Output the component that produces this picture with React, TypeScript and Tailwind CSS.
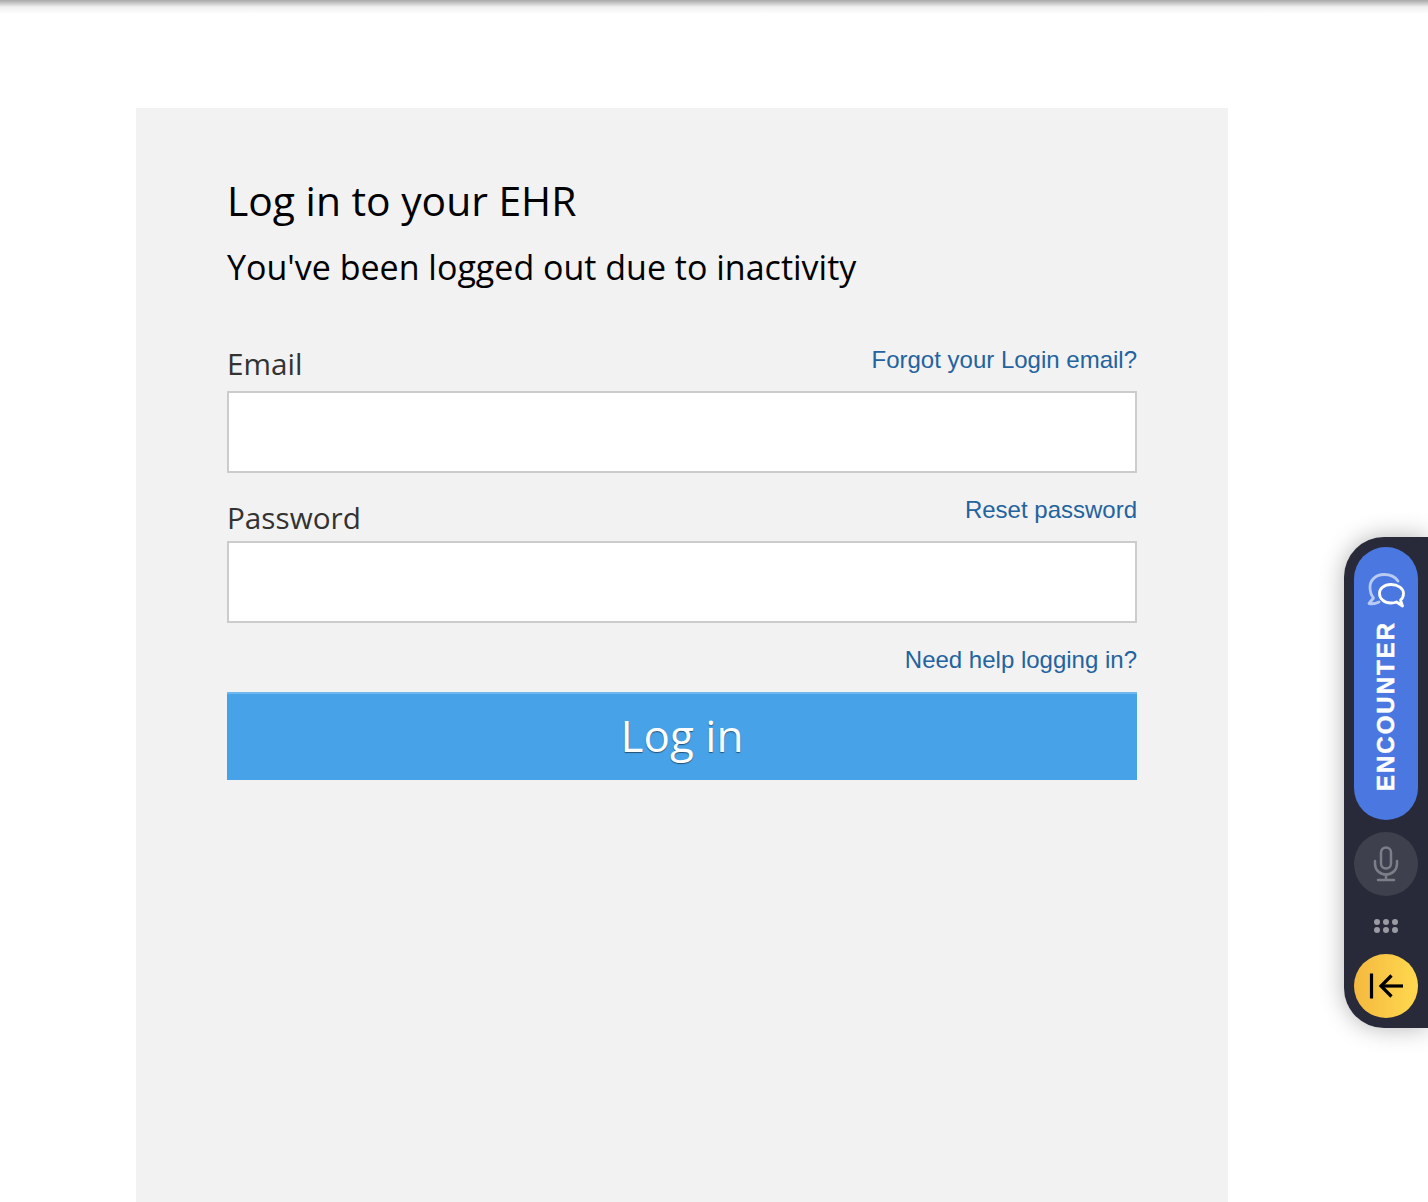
import React from "react";

const openSans = "font-['Open_Sans',sans-serif]";
const linkClass = "font-['Liberation_Sans',sans-serif] text-[24px] leading-[28px] text-[#23639f]";

const Field = ({ label, link, className, labelClass }: { label: string; link: string; className: string; labelClass: string }) => (
  <div className={className}>
    <div className="flex justify-between items-end h-[40px]">
      <label className={`${openSans} text-[29.7px] leading-[40px] text-[#333] ${labelClass}`}>{label}</label>
      <a className={`${linkClass} mb-[14px]`}>{link}</a>
    </div>
    <input className="block w-full h-[82px] mt-[3px] bg-white border-2 border-[#ccc] outline-none" />
  </div>
);

const EncounterWidget = () => (
  <aside className="fixed right-0 top-[537px] w-[84px] h-[491px] pl-[10px] pt-[10px] bg-[#282a3a] rounded-l-[40px] shadow-[0_0_24px_rgba(0,0,0,0.3)] flex flex-col">
    <div className="w-[64px] h-[273px] rounded-full bg-[#4b78e0] flex flex-col items-center pt-[26px]">
      <svg width="38" height="36" viewBox="0 0 38 36" fill="none" strokeLinecap="round" strokeLinejoin="round">
        <path d="M31 8C28 3.5 22 1.5 17 1.5C9 1.5 3 7 3 14C3 18 4 22 6.5 25L2 30.5C5 31 9 30.5 12 29" stroke="#b9caf3" strokeWidth="2.8" />
        <path d="M24 11.5C17 11.5 12.5 15.5 12.5 20.5C12.5 25.5 17 30 24 30C26 30 28 29.7 29.5 29L35.5 33L33.5 27C35.5 25.5 36.5 23 36.5 20.5C36.5 15.5 31 11.5 24 11.5Z" stroke="#fff" strokeWidth="2.8" />
      </svg>
      <span className="font-['Liberation_Sans',sans-serif] mt-[12px] text-[24px] leading-[28px] font-bold tracking-[2px] text-white [-webkit-text-stroke:0.5px_white] [writing-mode:vertical-rl] rotate-180">
        ENCOUNTER
      </span>
    </div>
    <div className="mt-[12px] w-[64px] h-[64px] rounded-full bg-[#3e404d] flex items-center justify-center">
      <svg width="26" height="36" viewBox="0 0 26 36" fill="none" stroke="#7c7e88" strokeWidth="2.5" strokeLinecap="round">
        <rect x="8" y="1.5" width="10" height="21" rx="5" />
        <path d="M2 15v3c0 6 5 10.5 11 10.5S24 24 24 18v-3" />
        <path d="M13 28.5V34M5 34h16" />
      </svg>
    </div>
    <div className="mt-[23px] ml-[20px] w-[24px] grid grid-cols-3 gap-x-[3px] gap-y-[2px]">
      {[0, 1, 2, 3, 4, 5].map((i) => (
        <span key={i} className="w-[6px] h-[6px] rounded-full bg-[#9a9ba3]" />
      ))}
    </div>
    <button className="mt-[21px] w-[64px] h-[64px] rounded-full bg-gradient-to-r from-[#f4b93f] to-[#ffd84f] flex items-center justify-center">
      <svg width="34" height="26" viewBox="0 0 34 26" fill="none" stroke="#000" strokeWidth="3.2">
        <path d="M2.5 0.5V25.5" />
        <path d="M34 13H12" />
        <path d="M22.5 2.5L12 13L22.5 23.5" />
      </svg>
    </button>
  </aside>
);

export default function App() {
  return (
    <div className="relative h-[1202px] overflow-hidden bg-white">
      <div className="absolute inset-x-0 top-0 h-[14px] bg-gradient-to-b from-[#a8a8a8] via-[#f0f0f0] to-white" />
      <main className="relative ml-[136px] mt-[108px] w-[1092px] h-[1094px] bg-[#f2f2f2] px-[91px] pt-[67px]">
        <h1 className={`${openSans} text-[40.8px] leading-[50px] text-black`}>Log in to your EHR</h1>
        <p className={`${openSans} mt-[17px] text-[34px] leading-[50px] text-black`}>You've been logged out due to inactivity</p>
        <form className="mt-[56px]">
          <Field className="" labelClass="mb-[4px]" label="Email" link="Forgot your Login email?" />
          <Field className="mt-[25px]" labelClass="mb-0" label="Password" link="Reset password" />
          <div className="mt-[23px] h-[28px] flex justify-end">
            <a className={linkClass}>Need help logging in?</a>
          </div>
          <button className={`${openSans} mt-[18px] block w-full h-[88px] pb-[4px] bg-[#47a2e8] border-t-2 border-[#6fb7ef] text-[44px] text-white [text-shadow:0_1px_1px_rgba(0,0,0,0.5)]`}>
            Log in
          </button>
        </form>
      </main>
      <EncounterWidget />
    </div>
  );
}
